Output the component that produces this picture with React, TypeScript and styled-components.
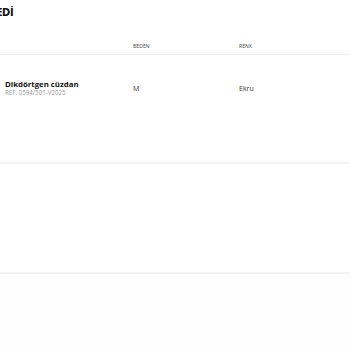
import React from 'react';
import styled, { createGlobalStyle } from 'styled-components';

const GlobalStyle = createGlobalStyle`
  html, body {
    margin: 0;
    padding: 0;
    background: #ffffff;
    font-family: 'Open Sans', 'Liberation Sans', sans-serif;
    color: #222;
  }
`;

const Page = styled.div`
  width: 350px;
  height: 350px;
  overflow: hidden;
  display: flex;
  flex-direction: column;
`;

const TitleBar = styled.div`
  height: 24px;
  display: flex;
  align-items: center;
  overflow: hidden;
`;

const Title = styled.h2`
  margin: 0 0 0 -32px;
  font-family: 'DejaVu Sans Condensed', 'DejaVu Sans', sans-serif;
  font-weight: 700;
  font-size: 11px;
  letter-spacing: -0.4px;
  color: #111;
  white-space: nowrap;
`;

const Row = styled.div<{ height: number }>`
  display: grid;
  grid-template-columns: 133px 106px 1fr;
  align-items: center;
  height: ${p => p.height}px;
`;

const HeadRow = styled(Row)`
  margin-top: 13px;
  border-bottom: 1px solid #ececec;
`;

const HeadCell = styled.span`
  font-size: 5px;
  color: #444;
  text-transform: uppercase;
  letter-spacing: 0.1px;
`;

const ItemRow = styled(Row)`
  border-bottom: 2px solid #f3f3f3;
  align-items: start;
  padding-top: 24px;
  box-sizing: border-box;
`;

const Product = styled.div`
  display: flex;
  flex-direction: column;
  padding-left: 5px;
`;

const ProductName = styled.span`
  font-weight: 700;
  font-size: 7.8px;
  color: #111;
  line-height: 10px;
`;

const ProductRef = styled.span`
  font-size: 6.2px;
  color: #9a9a9a;
  line-height: 8px;
`;

const Value = styled.span`
  font-size: 7px;
  color: #333;
  line-height: 10px;
  padding-top: 5px;
`;

const Empty = styled.div`
  height: 108px;
  border-bottom: 2px solid #f1f1f1;
`;

const Footer = styled.div`
  flex: 1;
  background: #fefefe;
`;

export default function App() {
  return (
    <Page>
      <GlobalStyle />
      <TitleBar>
        <Title>İADE EDİ</Title>
      </TitleBar>
      <HeadRow height={17}>
        <span />
        <HeadCell>Beden</HeadCell>
        <HeadCell>Renk</HeadCell>
      </HeadRow>
      <ItemRow height={109}>
        <Product>
          <ProductName>Dikdörtgen cüzdan</ProductName>
          <ProductRef>REF. 0594/501-V2025</ProductRef>
        </Product>
        <Value>M</Value>
        <Value>Ekru</Value>
      </ItemRow>
      <Empty />
      <Footer />
    </Page>
  );
}
